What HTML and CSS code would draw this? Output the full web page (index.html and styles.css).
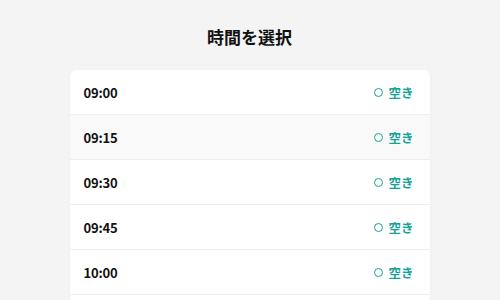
FILE: index.html
```html
<!DOCTYPE html>
<html lang="ja">
<head>
<meta charset="utf-8">
<link rel="stylesheet" href="styles.css">
</head>
<body>
<main class="page">
  <h1 class="title">時間を選択</h1>
  <ul class="slots">
    <li class="slot"><span class="time">09:00</span><span class="status"><span class="ring"></span>空き</span></li>
    <li class="slot slot-hover"><span class="time">09:15</span><span class="status"><span class="ring"></span>空き</span></li>
    <li class="slot"><span class="time">09:30</span><span class="status"><span class="ring"></span>空き</span></li>
    <li class="slot"><span class="time">09:45</span><span class="status"><span class="ring"></span>空き</span></li>
    <li class="slot"><span class="time">10:00</span><span class="status"><span class="ring"></span>空き</span></li>
  </ul>
</main>
</body>
</html>
```
FILE: styles.css
```css
html, body {
  margin: 0;
  padding: 0;
  background: #f4f4f4;
  font-family: "Noto Sans CJK JP", "Noto Sans", sans-serif;
  color: #111;
  overflow: hidden;
  height: 300px;
}
.page {
  padding-top: 24px;
  padding-right: 1px;
  display: flex;
  flex-direction: column;
  align-items: center;
}
.title {
  margin: 0 0 20px;
  font-size: 17px;
  line-height: 26px;
  font-weight: 700;
}
.slots {
  list-style: none;
  margin: 0;
  padding: 0 0 40px;
  width: 360px;
  background: #fff;
  border-radius: 6px;
  box-shadow: 0 1px 3px rgba(0,0,0,0.04);
}
.slot {
  display: flex;
  justify-content: space-between;
  align-items: center;
  height: 43px;
  padding: 1px 16px 0 14px;
  box-sizing: content-box;
  border-bottom: 1px solid #eeeeee;
}
.slot-hover {
  background: #f9f9f9;
}
.time {
  font-size: 13px;
  font-weight: 700;
  letter-spacing: -0.2px;
}
.status {
  display: flex;
  align-items: center;
  font-size: 12.5px;
  font-weight: 700;
  color: #16a394;
}
.ring {
  width: 9px;
  height: 9px;
  box-sizing: border-box;
  border: 1.2px solid #16a394;
  border-radius: 50%;
  margin-right: 5px;
}
```
